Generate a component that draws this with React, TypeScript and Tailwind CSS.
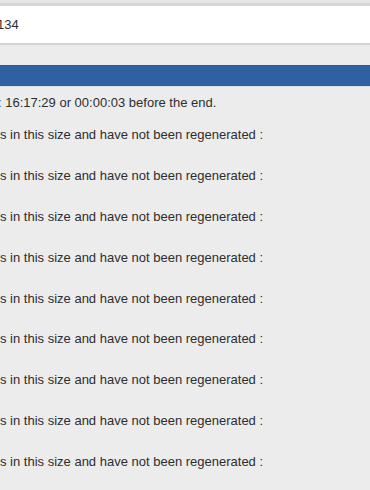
export default function App() {
  const rows = Array.from({ length: 9 });
  return (
    <div className="w-[370px] h-[490px] overflow-hidden bg-[#ececec] text-[13px] text-[#2e2e2e]" style={{ fontFamily: '"Liberation Sans", Arial, sans-serif' }}>
      <div className="h-[3px] bg-[#e6e6e6]" />
      <div className="h-[3px] bg-[#d6d6d6]" />
      <div className="h-[37px] bg-white flex items-center pl-0 overflow-hidden">
        <span className="ml-[-3px] leading-none">134</span>
      </div>
      <div className="h-[2px] bg-[#d4d4d4]" />
      <div className="h-[20px]" />
      <div className="h-[1px] bg-[#2a5a98]" />
      <div className="h-[20px] bg-[#2e60a2]" />
      <div className="h-[1px] bg-[#d9dee6]" />
      <div className="flex flex-col overflow-hidden">
        <div className="h-[16px] mt-[8px] flex items-center whitespace-nowrap">
          <span className="ml-[-2px]">: 16:17:29 or 00:00:03 before the end.</span>
        </div>
        <div className="h-[16px]" />
        {rows.map((_, i) => (
          <div key={i} className="h-[40.875px] flex items-start whitespace-nowrap">
            <span className="leading-[16px] h-[16px]">s in this size and have not been regenerated :</span>
          </div>
        ))}
      </div>
    </div>
  );
}
